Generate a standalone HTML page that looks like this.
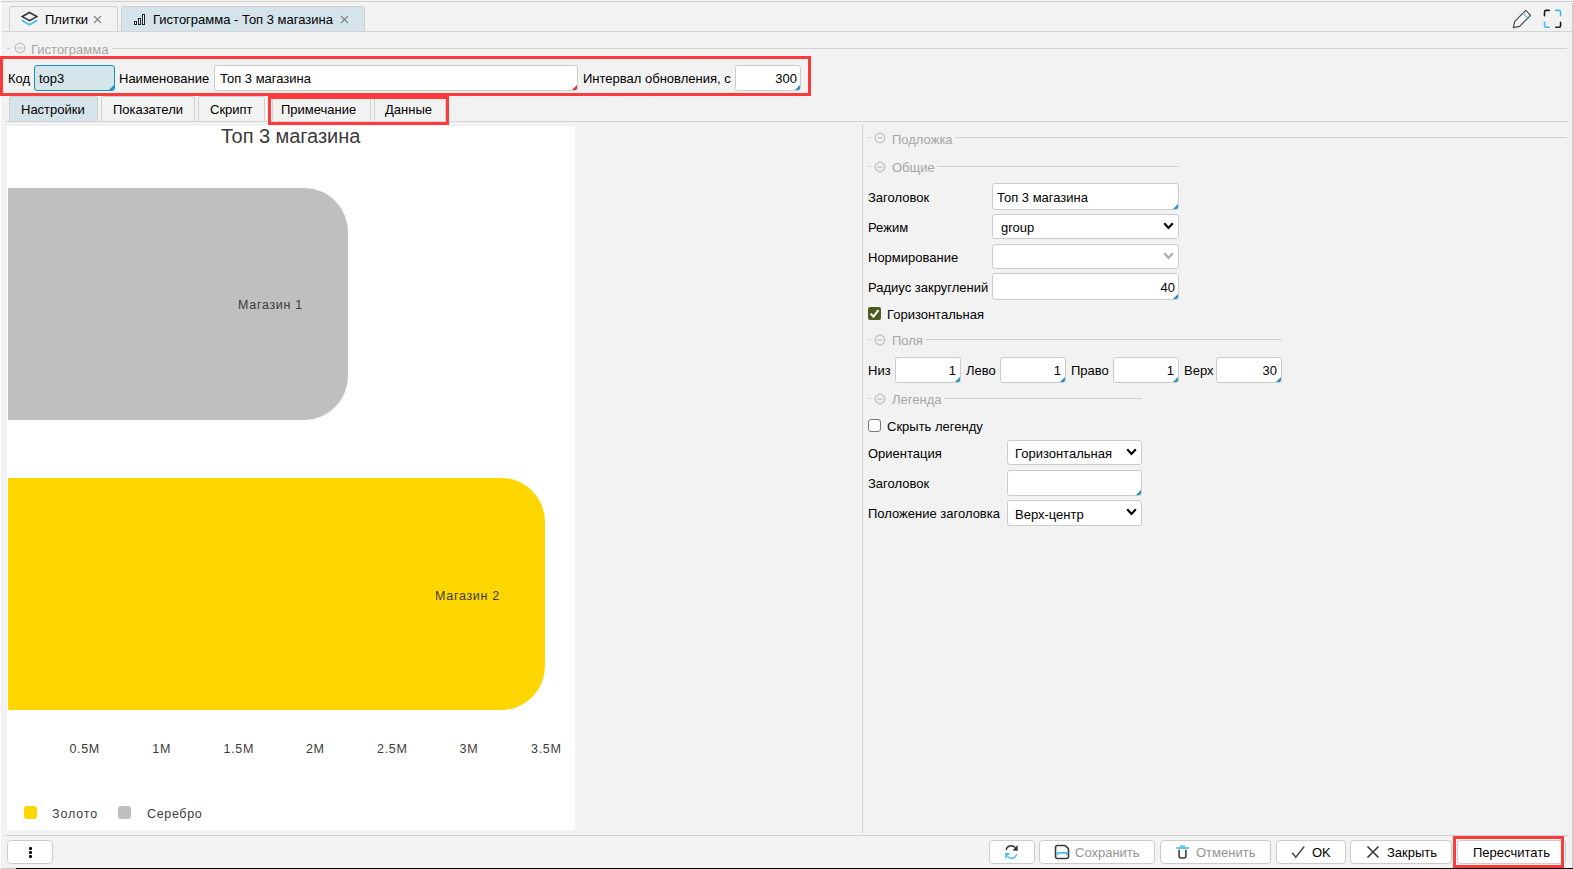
<!DOCTYPE html>
<html><head><meta charset="utf-8">
<style>
*{box-sizing:border-box;margin:0;padding:0}
html,body{width:1573px;height:869px;overflow:hidden;background:#f2f2f2;font-family:"Liberation Sans",sans-serif;font-size:13px;color:#000}
body{position:relative}
.a{position:absolute}
.t{position:absolute;white-space:nowrap;line-height:15px;font-size:13px;color:#000}
.leg{position:absolute;white-space:nowrap;line-height:15px;font-size:13px;color:#a6a6a6}
.tab{position:absolute;border:1px solid #d0d0d0;border-bottom:none;border-radius:3px 3px 0 0;background:#f2f2f2}
.inp{position:absolute;background:#fff;border:1px solid #cccccc;border-radius:3px;overflow:hidden}
.cn{position:absolute;right:0;bottom:0;width:0;height:0;border-left:5px solid transparent;border-bottom:5px solid #1e8ec6}
.red{position:absolute;border:3px solid #fc3b3d}
.btn{position:absolute;background:#fff;border:1px solid #cccccc;border-radius:4px}
.ct{position:absolute;white-space:nowrap;color:#3b3b3b;font-size:12.5px;line-height:15px;letter-spacing:0.7px}
</style></head><body>

<div class="a" style="left:0px;top:0px;width:1px;height:869px;background:#ffffff"></div>
<div class="a" style="left:1px;top:1px;width:1572px;height:1px;background:#d0d0d0"></div>
<div class="a" style="left:1572px;top:3px;width:1px;height:866px;background:#c9c9c9"></div>
<div class="tab" style="left:9px;top:6px;width:109px;height:26px;"></div>
<div class="tab" style="left:121px;top:6px;width:244px;height:26px;background:#d4e4ea"></div>
<div class="a" style="left:3px;top:31px;width:1569px;height:1px;background:#d3d3d3"></div>
<svg class="a" style="left:20px;top:10px" width="19" height="18" viewBox="0 0 19 18"><path d="M9.5 2.5 L16.8 6.6 L9.5 10.7 L2.2 6.6 Z" fill="none" stroke="#333" stroke-width="1.6" stroke-linejoin="miter"/><path d="M2.3 10.6 L9.5 14.7 L16.7 10.6" fill="none" stroke="#4dbdec" stroke-width="1.8" stroke-linecap="round" stroke-linejoin="round"/></svg>
<div class="t" style="left:45px;top:12px;">Плитки</div>
<svg class="a" style="left:93px;top:15px" width="9" height="9" viewBox="0 0 9 9"><path d="M1 1 L8 8 M8 1 L1 8" stroke="#808080" stroke-width="1.1"/></svg>
<svg class="a" style="left:133px;top:14px" width="13" height="11" viewBox="0 0 13 11"><rect x="1.5" y="7.5" width="2" height="3" fill="#f4f8fa" stroke="#222" stroke-width="1"/><rect x="5.5" y="4.5" width="2" height="6" fill="#f4f8fa" stroke="#222" stroke-width="1"/><rect x="9.5" y="0.5" width="2" height="10" fill="#f4f8fa" stroke="#222" stroke-width="1"/></svg>
<div class="t" style="left:153px;top:12px;">Гистограмма - Топ 3 магазина</div>
<svg class="a" style="left:340px;top:15px" width="9" height="9" viewBox="0 0 9 9"><path d="M1 1 L8 8 M8 1 L1 8" stroke="#808080" stroke-width="1.1"/></svg>
<svg class="a" style="left:1511px;top:9px" width="22" height="21" viewBox="0 0 22 21"><path d="M2.3 18.6 L3.8 12.3 L14.7 1.4 L19.6 6.3 L8.6 17.3 Z" fill="#f6f6f6" stroke="#4a4a4a" stroke-width="1.2" stroke-linejoin="round"/><path d="M11.9 4.3 L16.7 9" stroke="#5ec4ee" stroke-width="1.3"/></svg>
<svg class="a" style="left:1543px;top:9px" width="20" height="21" viewBox="0 0 20 21"><g fill="none" stroke-width="1.6" stroke-linecap="round" stroke-linejoin="round"><path d="M1.5 6.8 V2.9 Q1.5 1.4 3 1.4 H6.2" stroke="#1c1c1c"/><path d="M12.8 1.4 H16.1 Q17.6 1.4 17.6 2.9 V6.8" stroke="#3dbdee"/><path d="M1.5 13.2 V16.8 Q1.5 18.3 3 18.3 H6.2" stroke="#3dbdee"/><path d="M12.8 18.3 H16.1 Q17.6 18.3 17.6 16.8 V13.2" stroke="#1c1c1c"/></g></svg>
<div class="a" style="left:7px;top:48px;width:3px;height:1px;background:#cfcfcf"></div>
<svg class="a" style="left:12px;top:40.3px" width="16" height="16" viewBox="0 0 16 16"><circle cx="8" cy="8" r="4.75" fill="none" stroke="#c2c2c2" stroke-width="1.45"/><line x1="5.5" y1="8" x2="10.5" y2="8" stroke="#c2c2c2" stroke-width="1.3"/></svg>
<div class="leg" style="left:31px;top:42px;">Гистограмма</div>
<div class="a" style="left:112px;top:48px;width:1455px;height:1px;background:#d3d3d3"></div>
<div class="t" style="left:8px;top:71px;">Код</div>
<div class="inp" style="left:34px;top:65px;width:81px;height:26px;background:#d4e5eb;border-color:#1a8fc2"><div class="cn" style="border-bottom-color:#1e8ec6"></div></div>
<div class="t" style="left:39px;top:71px;">top3</div>
<div class="a" style="left:35px;top:66px;width:79px;height:23px;border:1px solid #1a8fc2;border-radius:2px;display:none"></div>
<div class="t" style="left:119px;top:71px;">Наименование</div>
<div class="inp" style="left:214px;top:65px;width:364px;height:26px;background:#fff;border-color:#cccccc"><div class="cn" style="border-bottom-color:#e8262a"></div></div>
<div class="t" style="left:220px;top:71px;">Топ 3 магазина</div>
<div class="t" style="left:583px;top:71px;">Интервал обновления, с</div>
<div class="inp" style="left:735px;top:65px;width:66px;height:26px;background:#fff;border-color:#cccccc"><div class="cn" style="border-bottom-color:#1e8ec6"></div></div>
<div class="t" style="right:776px;top:71px;text-align:right;">300</div>
<div class="tab" style="left:9px;top:96px;width:89px;height:26px;background:#d4e4ea"></div>
<div class="tab" style="left:101px;top:96px;width:94px;height:26px;"></div>
<div class="tab" style="left:198px;top:96px;width:67px;height:26px;"></div>
<div class="tab" style="left:272px;top:96px;width:99px;height:26px;"></div>
<div class="tab" style="left:374px;top:96px;width:72px;height:26px;"></div>
<div class="a" style="left:5px;top:121px;width:1564px;height:1px;background:#d3d3d3"></div>
<div class="t" style="left:21px;top:102px;">Настройки</div>
<div class="t" style="left:113px;top:102px;">Показатели</div>
<div class="t" style="left:210px;top:102px;">Скрипт</div>
<div class="t" style="left:281px;top:102px;">Примечание</div>
<div class="t" style="left:385px;top:102px;">Данные</div>
<div class="a" style="left:7px;top:126px;width:568px;height:704px;background:#fff"></div>
<div class="ct" style="left:221px;top:124.5px;font-size:20px;line-height:22px;letter-spacing:-0.05px;color:#3a3a3a">Топ 3 магазина</div>
<div class="a" style="left:8px;top:188px;width:340px;height:232px;background:#bfbfbf;border-radius:0 44px 44px 0"></div>
<div class="a" style="left:8px;top:478px;width:537px;height:232px;background:#ffd600;border-radius:0 44px 44px 0"></div>
<div class="ct" style="left:238px;top:298px">Магазин 1</div>
<div class="ct" style="left:435px;top:589px">Магазин 2</div>
<div class="ct" style="left:34.7px;width:100px;text-align:center;top:742px">0.5M</div>
<div class="ct" style="left:111.69999999999999px;width:100px;text-align:center;top:742px">1M</div>
<div class="ct" style="left:188.8px;width:100px;text-align:center;top:742px">1.5M</div>
<div class="ct" style="left:265.3px;width:100px;text-align:center;top:742px">2M</div>
<div class="ct" style="left:342.3px;width:100px;text-align:center;top:742px">2.5M</div>
<div class="ct" style="left:419px;width:100px;text-align:center;top:742px">3M</div>
<div class="ct" style="left:496.29999999999995px;width:100px;text-align:center;top:742px">3.5M</div>
<div class="a" style="left:24px;top:806px;width:13px;height:13px;background:#ffd600;border-radius:3px"></div>
<div class="ct" style="left:52px;top:807px;letter-spacing:0.85px">Золото</div>
<div class="a" style="left:118px;top:806px;width:13px;height:13px;background:#bfbfbf;border-radius:3px"></div>
<div class="ct" style="left:147px;top:807px;letter-spacing:0.65px">Серебро</div>
<div class="a" style="left:862px;top:125px;width:1px;height:708px;background:#cfcfcf"></div>
<div class="a" style="left:868px;top:137px;width:3px;height:1px;background:#cfcfcf"></div>
<svg class="a" style="left:872px;top:130px" width="16" height="16" viewBox="0 0 16 16"><circle cx="8" cy="8" r="4.75" fill="none" stroke="#c2c2c2" stroke-width="1.45"/><line x1="5.5" y1="8" x2="10.5" y2="8" stroke="#c2c2c2" stroke-width="1.3"/></svg>
<div class="leg" style="left:892px;top:132px;">Подложка</div>
<div class="a" style="left:956px;top:137px;width:611px;height:1px;background:#d3d3d3"></div>
<div class="a" style="left:868px;top:166px;width:3px;height:1px;background:#cfcfcf"></div>
<svg class="a" style="left:872px;top:158.5px" width="16" height="16" viewBox="0 0 16 16"><circle cx="8" cy="8" r="4.75" fill="none" stroke="#c2c2c2" stroke-width="1.45"/><line x1="5.5" y1="8" x2="10.5" y2="8" stroke="#c2c2c2" stroke-width="1.3"/></svg>
<div class="leg" style="left:892px;top:160px;">Общие</div>
<div class="a" style="left:937px;top:166px;width:242px;height:1px;background:#d3d3d3"></div>
<div class="t" style="left:868px;top:190px;">Заголовок</div>
<div class="inp" style="left:992px;top:183px;width:187px;height:27px;background:#fff;border-color:#cccccc"><div class="cn" style="border-bottom-color:#1e8ec6"></div></div>
<div class="t" style="left:997px;top:190px;">Топ 3 магазина</div>
<div class="t" style="left:868px;top:220px;">Режим</div>
<div class="inp" style="left:992px;top:214px;width:187px;height:25px;border-color:#cccccc"></div>
<div class="t" style="left:1001px;top:220px;">group</div>
<svg class="a" style="left:1163px;top:222px" width="11" height="7.5" viewBox="0 0 11 7.5"><polyline points="1.2,1.2 5.5,5.9 9.8,1.2" fill="none" stroke="#000" stroke-width="2.2"/></svg>
<div class="t" style="left:868px;top:250px;">Нормирование</div>
<div class="inp" style="left:992px;top:244px;width:187px;height:25px;border-color:#cccccc"></div>
<svg class="a" style="left:1163px;top:252px" width="11" height="7.5" viewBox="0 0 11 7.5"><polyline points="1.2,1.2 5.5,5.9 9.8,1.2" fill="none" stroke="#aaaaaa" stroke-width="2.2"/></svg>
<div class="t" style="left:868px;top:280px;">Радиус закруглений</div>
<div class="inp" style="left:992px;top:273px;width:187px;height:27px;background:#fff;border-color:#cccccc"><div class="cn" style="border-bottom-color:#1e8ec6"></div></div>
<div class="t" style="right:398px;top:280px;text-align:right;">40</div>
<div class="a" style="left:868px;top:307px;width:13px;height:13px;background:#4b5d1c;border-radius:2px"></div>
<svg class="a" style="left:868px;top:307px" width="13" height="13" viewBox="0 0 13 13"><path d="M2.6 6.6 L5.5 9.7 L10.5 3.1" fill="none" stroke="#fff" stroke-width="2"/></svg>
<div class="t" style="left:887px;top:307px;">Горизонтальная</div>
<div class="a" style="left:868px;top:339px;width:3px;height:1px;background:#cfcfcf"></div>
<svg class="a" style="left:872px;top:331.5px" width="16" height="16" viewBox="0 0 16 16"><circle cx="8" cy="8" r="4.75" fill="none" stroke="#c2c2c2" stroke-width="1.45"/><line x1="5.5" y1="8" x2="10.5" y2="8" stroke="#c2c2c2" stroke-width="1.3"/></svg>
<div class="leg" style="left:892px;top:333px;">Поля</div>
<div class="a" style="left:925px;top:339px;width:357px;height:1px;background:#d3d3d3"></div>
<div class="t" style="left:868px;top:363px;">Низ</div>
<div class="inp" style="left:895px;top:357px;width:66px;height:26px;background:#fff;border-color:#cccccc"><div class="cn" style="border-bottom-color:#1e8ec6"></div></div>
<div class="t" style="right:617px;top:363px;text-align:right;">1</div>
<div class="t" style="left:966px;top:363px;">Лево</div>
<div class="inp" style="left:1000px;top:357px;width:66px;height:26px;background:#fff;border-color:#cccccc"><div class="cn" style="border-bottom-color:#1e8ec6"></div></div>
<div class="t" style="right:512px;top:363px;text-align:right;">1</div>
<div class="t" style="left:1071px;top:363px;">Право</div>
<div class="inp" style="left:1113px;top:357px;width:66px;height:26px;background:#fff;border-color:#cccccc"><div class="cn" style="border-bottom-color:#1e8ec6"></div></div>
<div class="t" style="right:399px;top:363px;text-align:right;">1</div>
<div class="t" style="left:1184px;top:363px;">Верх</div>
<div class="inp" style="left:1216px;top:357px;width:66px;height:26px;background:#fff;border-color:#cccccc"><div class="cn" style="border-bottom-color:#1e8ec6"></div></div>
<div class="t" style="right:296px;top:363px;text-align:right;">30</div>
<div class="a" style="left:868px;top:398px;width:3px;height:1px;background:#cfcfcf"></div>
<svg class="a" style="left:872px;top:390.5px" width="16" height="16" viewBox="0 0 16 16"><circle cx="8" cy="8" r="4.75" fill="none" stroke="#c2c2c2" stroke-width="1.45"/><line x1="5.5" y1="8" x2="10.5" y2="8" stroke="#c2c2c2" stroke-width="1.3"/></svg>
<div class="leg" style="left:892px;top:392px;">Легенда</div>
<div class="a" style="left:944px;top:398px;width:198px;height:1px;background:#d3d3d3"></div>
<div class="a" style="left:868px;top:419px;width:13px;height:13px;background:#fff;border:1px solid #777;border-radius:3px"></div>
<div class="t" style="left:887px;top:419px;">Скрыть легенду</div>
<div class="t" style="left:868px;top:446px;">Ориентация</div>
<div class="inp" style="left:1007px;top:440px;width:135px;height:25px;border-color:#cccccc"></div>
<div class="t" style="left:1015px;top:446px;">Горизонтальная</div>
<svg class="a" style="left:1126px;top:448px" width="11" height="7.5" viewBox="0 0 11 7.5"><polyline points="1.2,1.2 5.5,5.9 9.8,1.2" fill="none" stroke="#000" stroke-width="2.2"/></svg>
<div class="t" style="left:868px;top:476px;">Заголовок</div>
<div class="inp" style="left:1007px;top:470px;width:135px;height:26px;background:#fff;border-color:#cccccc"><div class="cn" style="border-bottom-color:#1e8ec6"></div></div>
<div class="t" style="left:868px;top:506px;">Положение заголовка</div>
<div class="inp" style="left:1007px;top:500px;width:135px;height:26px;border-color:#cccccc"></div>
<div class="t" style="left:1015px;top:507px;">Верх-центр</div>
<svg class="a" style="left:1126px;top:508px" width="11" height="7.5" viewBox="0 0 11 7.5"><polyline points="1.2,1.2 5.5,5.9 9.8,1.2" fill="none" stroke="#000" stroke-width="2.2"/></svg>
<div class="a" style="left:5px;top:835px;width:1564px;height:1px;background:#d3d3d3"></div>
<div class="btn" style="left:7px;top:840px;width:46px;height:24px;"></div>
<div class="a" style="left:29.3px;top:847.2px;width:2.5px;height:2.5px;background:#000;border-radius:50%"></div>
<div class="a" style="left:29.3px;top:851.2px;width:2.5px;height:2.5px;background:#000;border-radius:50%"></div>
<div class="a" style="left:29.3px;top:855.2px;width:2.5px;height:2.5px;background:#000;border-radius:50%"></div>
<div class="btn" style="left:989px;top:840px;width:46px;height:24px;"></div>
<svg class="a" style="left:1000px;top:842px" width="24" height="20" viewBox="0 0 24 20"><path d="M6.1 7.9 Q7.2 3.8 11.3 3.8 Q13.6 3.8 15.2 5.6" fill="none" stroke="#303030" stroke-width="1.5"/><path d="M17.6 2.9 L17.7 8.7 L12.5 8.5 Z" fill="#303030"/><path d="M16.6 12.1 Q15.6 16.2 11.3 16.2 Q9.2 16.2 7.6 14.4" fill="none" stroke="#48bdee" stroke-width="1.5"/><path d="M5.2 10.8 L5.3 17 L9.9 11 Z" fill="#48bdee"/></svg>
<div class="btn" style="left:1039px;top:840px;width:116px;height:24px;"></div>
<svg class="a" style="left:1054px;top:844px" width="16" height="16" viewBox="0 0 16 16"><path d="M3.5 1.5 H10.5 Q11.3 1.5 11.9 2.1 L13.9 4.1 Q14.5 4.7 14.5 5.5 V12.5 Q14.5 14.5 12.5 14.5 H3.5 Q1.5 14.5 1.5 12.5 V3.5 Q1.5 1.5 3.5 1.5 Z" fill="none" stroke="#3c3c3c" stroke-width="1.6"/><path d="M3.3 11.2 V8.9 H12.7 V11.2" fill="none" stroke="#4cbdee" stroke-width="1.7"/></svg>
<div class="t" style="left:1075px;top:845px;color:#949494">Сохранить</div>
<div class="btn" style="left:1160px;top:840px;width:111px;height:24px;"></div>
<svg class="a" style="left:1175px;top:844px" width="15" height="16" viewBox="0 0 15 16"><path d="M1.3 4 H13.7" stroke="#5cc3ee" stroke-width="1.9"/><path d="M5.9 3.6 V2 H9.1 V3.6" fill="none" stroke="#5cc3ee" stroke-width="1.6"/><path d="M4.1 5.8 V12 Q4.1 14 6.1 14 H8.9 Q10.9 14 10.9 12 V5.8" fill="none" stroke="#3c3c3c" stroke-width="1.6"/></svg>
<div class="t" style="left:1196px;top:845px;color:#949494">Отменить</div>
<div class="btn" style="left:1276px;top:840px;width:70px;height:24px;"></div>
<svg class="a" style="left:1291px;top:845px" width="15" height="14" viewBox="0 0 15 14"><path d="M1.2 7.8 L4.8 12.2 L13.2 1.6" fill="none" stroke="#505050" stroke-width="1.6"/></svg>
<div class="t" style="left:1312px;top:845px;">OK</div>
<div class="btn" style="left:1350px;top:840px;width:102px;height:24px;"></div>
<svg class="a" style="left:1366px;top:845px" width="14" height="14" viewBox="0 0 14 14"><path d="M1.5 1.5 L12.5 12.5 M12.5 1.5 L1.5 12.5" stroke="#3a3a3a" stroke-width="1.6"/></svg>
<div class="t" style="left:1387px;top:845px;">Закрыть</div>
<div class="btn" style="left:1457px;top:840px;width:109px;height:24px;"></div>
<div class="t" style="left:1473px;top:845px;">Пересчитать</div>
<div class="a" style="left:16px;top:868px;width:1557px;height:1px;background:#000"></div>
<div class="red" style="left:0px;top:56px;width:811px;height:40px;"></div>
<div class="red" style="left:268px;top:96px;width:181px;height:29px;"></div>
<div class="red" style="left:1453px;top:836px;width:111px;height:32px;"></div>
<div class="a" style="left:16px;top:868px;width:1557px;height:1px;background:#000"></div>
<div class="a" style="left:1px;top:868px;width:15px;height:1px;background:#c8c8c8"></div>
</body></html>
